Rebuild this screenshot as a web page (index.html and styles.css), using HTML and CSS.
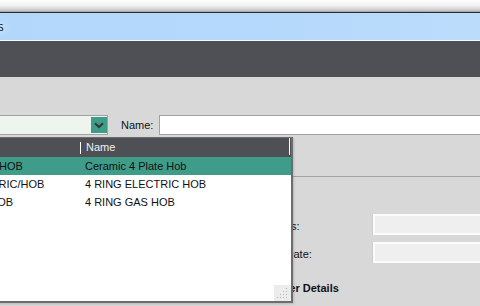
FILE: index.html
```html
<!DOCTYPE html>
<html>
<head>
<meta charset="utf-8">
<link rel="stylesheet" href="styles.css">
</head>
<body>
<div class="window">
  <div class="chrome"></div>
  <div class="titlebar"><span class="title">Products</span></div>
  <div class="toolbar"></div>
  <main class="content">
    <div class="search-row">
      <div class="combo">
        <span class="combo-value"></span>
        <span class="combo-btn">
          <svg width="10" height="7" viewBox="0 0 10 7"><path d="M1 1.2 L5 5 L9 1.2" fill="none" stroke="#2f3a36" stroke-width="2"/></svg>
        </span>
      </div>
      <label class="name-lbl">Name:</label>
      <div class="name-input"></div>
    </div>
    <div class="tabs"></div>
    <div class="details">
      <div class="field-grid">
        <span class="flabel">No. of Rings:</span><span class="finput"></span>
        <span class="flabel">Purchase Date:</span><span class="finput"></span>
      </div>
      <h3 class="section">Manufacturer Details</h3>
    </div>

    <div class="popup">
      <div class="prow phead">
        <span class="c1"></span>
        <span class="c2">Name</span>
      </div>
      <div class="prow selected">
        <span class="c1">CER-4/HOB</span>
        <span class="c2">Ceramic 4 Plate Hob</span>
      </div>
      <div class="prow">
        <span class="c1">ELECTRIC/HOB</span>
        <span class="c2">4 RING ELECTRIC HOB</span>
      </div>
      <div class="prow">
        <span class="c1">GAS/HOB</span>
        <span class="c2">4 RING GAS HOB</span>
      </div>
      <div class="grip">
        <svg width="12" height="12" viewBox="0 0 12 12" fill="#b4b4b4">
          <rect x="9" y="1" width="1" height="1"/>
          <rect x="6" y="4" width="1" height="1"/><rect x="9" y="4" width="1" height="1"/>
          <rect x="3" y="7" width="1" height="1"/><rect x="6" y="7" width="1" height="1"/><rect x="9" y="7" width="1" height="1"/>
          <rect x="0" y="10" width="1" height="1"/><rect x="3" y="10" width="1" height="1"/><rect x="6" y="10" width="1" height="1"/><rect x="9" y="10" width="1" height="1"/>
        </svg>
      </div>
    </div>
  </main>
</div>
</body>
</html>
```
FILE: styles.css
```css
* { box-sizing: border-box; }
html, body {
  margin: 0;
  padding: 0;
  width: 480px;
  height: 306px;
  overflow: hidden;
  background: #d8d8d8;
  font-family: "Liberation Sans", Arial, sans-serif;
  font-size: 11px;
  color: #111;
}
.window { width: 480px; height: 306px; overflow: hidden; position: relative; }

.chrome {
  height: 13px;
  background: linear-gradient(#fefefe 0%, #f0f0f0 45%, #c9c9c9 80%, #9a9a9a 92%, #2d2d2d 92%, #2d2d2d 100%);
}
.titlebar {
  height: 28px;
  background: linear-gradient(90deg, #b3d7fb 0%, #b5d9fb 60%, #bcdcfb 100%);
  border-bottom: 1px solid #f4f9ff;
  display: flex;
  align-items: center;
  overflow: hidden;
}
.title {
  font-family: "Open Sans", "DejaVu Sans", sans-serif;
  font-size: 12px;
  color: #0d1a2a;
  margin-left: -46px;
  text-shadow: 0 0 6px #fff, 0 0 10px #fff;
}
.toolbar {
  height: 36px;
  background: #4f5055;
}

.content {
  position: relative;
  height: 229px;
  background: #d8d8d8;
  padding-top: 38px;
}

.search-row {
  display: flex;
  align-items: center;
  height: 20px;
}
.combo {
  width: 108px;
  height: 20px;
  display: flex;
  background: #edf5ee;
  border: 1px solid #a2a2a2;
  border-left: none;
}
.combo-value { flex: 1; }
.combo-btn {
  width: 16px;
  background: #3f9c88;
  display: flex;
  align-items: center;
  justify-content: center;
  margin: 1px 0;
}
.name-lbl {
  margin-left: 13px;
  width: 38px;
  color: #111;
}
.name-input {
  flex: 1;
  height: 20px;
  background: #fff;
  border: 1px solid #a2a2a2;
  border-right: none;
}

.tabs {
  height: 42px;
  border-bottom: 1px solid #a3a3a3;
}

.details {
  padding-left: 236px;
  padding-top: 37px;
}
.field-grid {
  display: grid;
  grid-template-columns: 137px 120px;
  grid-auto-rows: 21px;
  row-gap: 7px;
  align-items: center;
}
.flabel { color: #111; padding-top: 2px; }
.finput {
  height: 21px;
  background: #efefef;
  border: 2px solid #fbfbfb;
  box-shadow: -1px 0 0 #cfcfcf;
}
.section {
  margin: 19px 0 0 -6px;
  font-size: 11px;
  font-weight: bold;
  color: #111;
}

.popup {
  position: absolute;
  left: -43px;
  top: 60px;
  width: 336px;
  height: 166px;
  background: #fff;
  border: 1px solid #6c6c6c;
  border-right-width: 2px;
  border-bottom-width: 2px;
  box-shadow: 1px 1px 2px rgba(0,0,0,0.15);
}
.prow {
  display: flex;
  height: 18px;
  align-items: center;
  white-space: nowrap;
}
.prow .c1 {
  width: 123px;
  padding-left: 5px;
  overflow: hidden;
}
.prow .c2 {
  flex: 1;
  padding-left: 4px;
}
.phead {
  height: 19px;
  background: #4f5055;
  color: #eef0f2;
}
.phead .c1 {
  height: 12px;
  border-right: 1px solid #fff;
  margin-top: 1px;
}
.phead .c2 {
  height: 17px;
  border-right: 1px solid #fff;
  margin-right: 1px;
  display: flex;
  align-items: center;
  align-self: flex-start;
  padding-left: 5px;
}
.selected { background: #3f9c88; color: #111; }
.grip {
  position: absolute;
  right: 0;
  bottom: 0;
  width: 17px;
  height: 16px;
  background: #ececec;
  display: flex;
  align-items: flex-end;
  justify-content: flex-end;
  padding: 0 2px 2px 0;
}
```
